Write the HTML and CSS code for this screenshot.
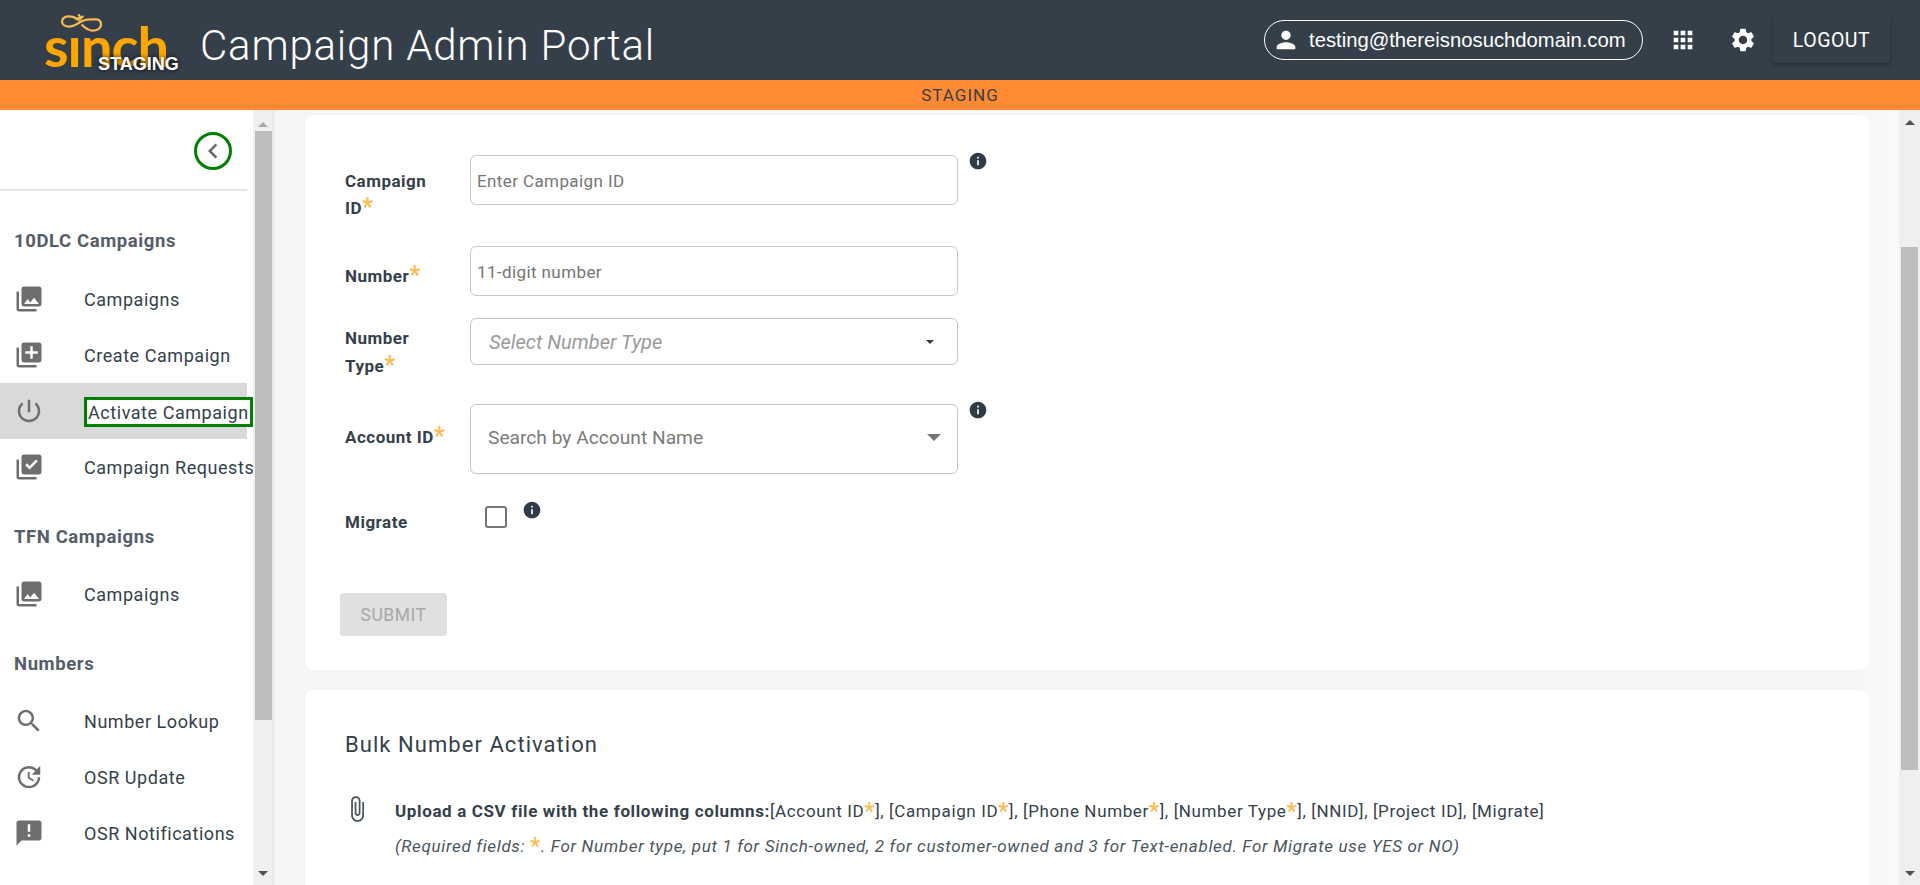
FILE: index.html
```html
<!DOCTYPE html>
<html lang="en">
<head>
<meta charset="utf-8">
<title>Campaign Admin Portal</title>
<link rel="stylesheet" href="styles.css">
</head>
<body>
<svg class="defs" width="0" height="0" aria-hidden="true">
  <symbol id="i-photo" viewBox="0 0 24 24"><path d="M22 16V4c0-1.1-.9-2-2-2H8c-1.1 0-2 .9-2 2v12c0 1.1.9 2 2 2h12c1.1 0 2-.9 2-2zm-11-4l2.03 2.71L16 11l4 5H8l3-4zM2 6v14c0 1.1.9 2 2 2h14v-2H4V6H2z"/></symbol>
  <symbol id="i-add" viewBox="0 0 24 24"><path d="M4 6H2v14c0 1.1.9 2 2 2h14v-2H4V6zm16-4H8c-1.1 0-2 .9-2 2v12c0 1.1.9 2 2 2h12c1.1 0 2-.9 2-2V4c0-1.1-.9-2-2-2zm-1 9h-4v4h-2v-4H9V9h4V5h2v4h4v2z"/></symbol>
  <symbol id="i-power" viewBox="0 0 24 24"><path d="M13 3h-2v10h2V3zm4.83 2.17l-1.42 1.42C17.99 7.86 19 9.81 19 12c0 3.87-3.13 7-7 7s-7-3.13-7-7c0-2.19 1.01-4.14 2.58-5.42L6.17 5.17C4.23 6.82 3 9.26 3 12c0 4.97 4.03 9 9 9s9-4.03 9-9c0-2.74-1.23-5.18-3.17-6.83z"/></symbol>
  <symbol id="i-check" viewBox="0 0 24 24"><path d="M20 2H8c-1.1 0-2 .9-2 2v12c0 1.1.9 2 2 2h12c1.1 0 2-.9 2-2V4c0-1.1-.9-2-2-2zm-7.53 12L9 10.5l1.4-1.41 2.07 2.08L17.6 6 19 7.41 12.47 14zM4 6H2v14c0 1.1.9 2 2 2h14v-2H4V6z"/></symbol>
  <symbol id="i-search" viewBox="0 0 24 24"><path d="M15.5 14h-.79l-.28-.27C15.41 12.59 16 11.11 16 9.5 16 5.91 13.09 3 9.5 3S3 5.91 3 9.5 5.91 16 9.5 16c1.61 0 3.09-.59 4.23-1.57l.27.28v.79l5 4.99L20.49 19l-4.99-5zm-6 0C7.01 14 5 11.99 5 9.5S7.01 5 9.5 5 14 7.01 14 9.5 11.99 14 9.5 14z"/></symbol>
  <symbol id="i-update" viewBox="0 0 24 24"><path d="M21 10.12h-6.78l2.74-2.82c-2.73-2.7-7.15-2.8-9.88-.1-2.73 2.71-2.73 7.08 0 9.79s7.15 2.71 9.88 0C18.32 15.65 19 14.08 19 12.1h2c0 1.98-.88 4.55-2.64 6.29-3.51 3.48-9.21 3.48-12.72 0-3.5-3.47-3.53-9.11-.02-12.58s9.14-3.47 12.65 0L21 3v7.12zM12.5 8v4.25l3.5 2.08-.72 1.21L11 13V8h1.5z"/></symbol>
  <symbol id="i-notify" viewBox="0 0 24 24"><path d="M20 2H4c-1.1 0-1.99.9-1.99 2L2 22l4-4h14c1.1 0 2-.9 2-2V4c0-1.1-.9-2-2-2zm-7 9h-2V5h2v6zm0 4h-2v-2h2v2z"/></symbol>
  <symbol id="i-info" viewBox="0 0 24 24"><path d="M12 2C6.48 2 2 6.48 2 12s4.48 10 10 10 10-4.48 10-10S17.52 2 12 2zm1 15h-2v-6h2v6zm0-8h-2V7h2v2z"/></symbol>
</svg>

<header class="topbar">
  <div class="logo">
    <svg class="logo-knot" viewBox="0 0 40 20"><path d="M19 8C15 4 11 3 7 3 3 3 1 6 1 8c0 3 3 5 7 5 5 0 9-4 14-6 4-1.500 8-1 12-1 3 0 5 2 5 5 0 4-4 6-8 6-5 0-8-3-11-6M17 1l3 5M14 6l8-3"/></svg>
    <span class="logo-word">sınch</span>
    <span class="logo-tag">STAGING</span>
  </div>
  <h1 class="app-title">Campaign Admin Portal</h1>
  <div class="top-actions">
    <div class="user-pill">
      <svg class="pill-icon" viewBox="0 0 24 24"><path d="M12 12c2.21 0 4-1.79 4-4s-1.79-4-4-4-4 1.79-4 4 1.79 4 4 4zm0 2c-2.67 0-8 1.34-8 4v2h16v-2c0-2.66-5.33-4-8-4z"/></svg>
      <span>testing@thereisnosuchdomain.com</span>
    </div>
    <svg class="top-icon grid-icon" viewBox="0 0 24 24"><path d="M4 8h4V4H4v4zm6 12h4v-4h-4v4zm-6 0h4v-4H4v4zm0-6h4v-4H4v4zm6 0h4v-4h-4v4zm6-10v4h4V4h-4zm-6 4h4V4h-4v4zm6 6h4v-4h-4v4zm0 6h4v-4h-4v4z"/></svg>
    <svg class="top-icon gear-icon" viewBox="0 0 24 24"><path d="M19.14 12.94c.04-.3.06-.61.06-.94 0-.32-.02-.64-.07-.94l2.03-1.58c.18-.14.23-.41.12-.61l-1.92-3.32c-.12-.22-.37-.29-.59-.22l-2.39.96c-.5-.38-1.03-.7-1.62-.94l-.36-2.54c-.04-.24-.24-.41-.48-.41h-3.84c-.24 0-.43.17-.47.41l-.36 2.54c-.59.24-1.13.57-1.62.94l-2.39-.96c-.22-.08-.47 0-.59.22L2.74 8.87c-.12.21-.08.47.12.61l2.03 1.58c-.05.3-.09.63-.09.94s.02.64.07.94l-2.03 1.58c-.18.14-.23.41-.12.61l1.92 3.32c.12.22.37.29.59.22l2.39-.96c.5.38 1.03.7 1.62.94l.36 2.54c.05.24.24.41.48.41h3.84c.24 0 .44-.17.47-.41l.36-2.54c.59-.24 1.13-.56 1.62-.94l2.39.96c.22.08.47 0 .59-.22l1.92-3.32c.12-.22.07-.47-.12-.61l-2.01-1.58zM12 15.6c-1.98 0-3.6-1.62-3.6-3.6s1.62-3.6 3.6-3.6 3.6 1.62 3.6 3.6-1.62 3.6-3.6 3.6z"/></svg>
    <button class="logout">LOGOUT</button>
  </div>
</header>
<div class="env-banner">STAGING</div>

<div class="layout">
  <aside class="sidebar">
    <nav class="side-content">
      <div class="collapse-row">
        <span class="collapse-btn"><svg viewBox="0 0 24 24"><path d="M15.41 7.41L14 6l-6 6 6 6 1.41-1.41L10.83 12z"/></svg></span>
      </div>
      <h2 class="side-title first">10DLC Campaigns</h2>
      <a class="side-item"><svg class="side-icon"><use href="#i-photo"/></svg><span>Campaigns</span></a>
      <a class="side-item"><svg class="side-icon"><use href="#i-add"/></svg><span>Create Campaign</span></a>
      <a class="side-item active"><svg class="side-icon"><use href="#i-power"/></svg><span class="focus-label">Activate Campaign</span></a>
      <a class="side-item"><svg class="side-icon"><use href="#i-check"/></svg><span>Campaign Requests</span></a>
      <h2 class="side-title">TFN Campaigns</h2>
      <a class="side-item"><svg class="side-icon"><use href="#i-photo"/></svg><span>Campaigns</span></a>
      <h2 class="side-title">Numbers</h2>
      <a class="side-item"><svg class="side-icon"><use href="#i-search"/></svg><span>Number Lookup</span></a>
      <a class="side-item"><svg class="side-icon"><use href="#i-update"/></svg><span>OSR Update</span></a>
      <a class="side-item"><svg class="side-icon"><use href="#i-notify"/></svg><span>OSR Notifications</span></a>
    </nav>
    <div class="scrollbar side-scroll">
      <span class="arrow up"></span>
      <span class="thumb"></span>
      <span class="arrow down"></span>
    </div>
  </aside>

  <main class="main">
    <div class="main-content">
      <section class="card form-card">
        <div class="field f-campaign">
          <label class="field-label">Campaign ID<em>*</em></label>
          <input class="text-input" placeholder="Enter Campaign ID">
          <svg class="info"><use href="#i-info"/></svg>
        </div>
        <div class="field f-number">
          <label class="field-label">Number<em>*</em></label>
          <input class="text-input" placeholder="11-digit number">
        </div>
        <div class="field f-type">
          <label class="field-label">Number Type<em>*</em></label>
          <div class="select select-type"><span>Select Number Type</span><i class="caret small"></i></div>
        </div>
        <div class="field f-account">
          <label class="field-label">Account ID<em>*</em></label>
          <div class="select select-account"><span>Search by Account Name</span><i class="caret"></i></div>
          <svg class="info"><use href="#i-info"/></svg>
        </div>
        <div class="field f-migrate">
          <label class="field-label">Migrate</label>
          <span class="checkbox"></span>
          <svg class="info"><use href="#i-info"/></svg>
        </div>
        <button class="submit" disabled>SUBMIT</button>
      </section>

      <section class="card bulk-card">
        <h3 class="bulk-title">Bulk Number Activation</h3>
        <div class="bulk-row">
          <svg class="clip" viewBox="0 0 24 24"><path d="M16.5 6v11.5c0 2.21-1.79 4-4 4s-4-1.79-4-4V5c0-1.38 1.12-2.5 2.5-2.5s2.5 1.12 2.5 2.5v10.5c0 .55-.45 1-1 1s-1-.45-1-1V6H10v9.5c0 1.38 1.12 2.5 2.5 2.5s2.5-1.12 2.5-2.5V5c0-2.21-1.79-4-4-4S7 2.79 7 5v12.5c0 3.04 2.46 5.5 5.5 5.5s5.5-2.46 5.5-5.5V6h-1.5z"/></svg>
          <div class="bulk-text">
            <p class="bulk-line"><strong>Upload a CSV file with the following columns:</strong>[Account ID<em>*</em>], [Campaign ID<em>*</em>], [Phone Number<em>*</em>], [Number Type<em>*</em>], [NNID], [Project ID], [Migrate]</p>
            <p class="bulk-note">(Required fields: <em>*</em>. For Number type, put 1 for Sinch-owned, 2 for customer-owned and 3 for Text-enabled. For Migrate use YES or NO)</p>
          </div>
        </div>
      </section>
    </div>
    <div class="scrollbar main-scroll">
      <span class="arrow up"></span>
      <span class="thumb"></span>
      <span class="arrow down"></span>
    </div>
  </main>
</div>
</body>
</html>
```
FILE: styles.css
```css
* { box-sizing: border-box; }
html, body { margin: 0; height: 885px; overflow: hidden; }
body { font-family: Roboto, "Liberation Sans", sans-serif; color: #343f4a; background: #fff; }
.defs { position: absolute; }

.topbar { height: 80px; background: #343f4a; color: #fff; display: flex; align-items: center; padding-left: 44px; }
.logo { position: relative; width: 156px; height: 80px; flex: none; }
.logo-knot { position: absolute; left: 17px; top: 13px; width: 41px; height: 21px; fill: none; stroke: #f5b955; stroke-width: 2.2; }
.logo-word { position: absolute; left: 0; top: 13px; font: 700 56px/66px Lato, sans-serif; color: #ffa600; letter-spacing: -1px; }
.logo-tag { position: absolute; left: 54px; top: 54px; font: 700 18px/20px "Liberation Sans", sans-serif; color: #fff; text-shadow: 0 0 4px #000; }
.app-title { margin: 0; padding-top: 12px; font-size: 42px; font-weight: 300; letter-spacing: .8px; line-height: 68px; }
.top-actions { margin-left: auto; display: flex; align-items: center; padding-right: 30px; }
.user-pill { width: 379px; height: 40px; border: 1px solid #fff; border-radius: 20px; display: flex; align-items: center; gap: 9px; padding-left: 7px; font: 20.25px "Liberation Sans", sans-serif; }
.pill-icon { width: 28px; height: 28px; fill: #fff; }
.top-icon { width: 28px; height: 28px; fill: #fff; flex: none; }
.grid-icon { margin-left: 26px; }
.gear-icon { margin-left: 32px; }
.logout { margin-left: 16px; width: 117px; height: 46px; border: 0; border-radius: 4px; background: #343f4a; color: #fff; font: 400 19.5px Roboto, sans-serif; letter-spacing: .5px; box-shadow: 0 2px 4px rgba(0,0,0,.3); }

.env-banner { height: 30px; background: #ff8a33; text-align: center; font-size: 17px; line-height: 31px; letter-spacing: 1px; }

.layout { display: flex; height: 775px; }
.sidebar { width: 274px; flex: none; display: flex; background: #fff; overflow: hidden; }
.side-content { width: 253px; flex: none; overflow: hidden; }
.collapse-row { height: 81px; width: 247px; border-bottom: 2px solid #e4e4e4; display: flex; justify-content: flex-end; padding: 22px 15px 0 0; }
.collapse-btn { width: 38px; height: 38px; border: 3px solid #008000; border-radius: 50%; display: flex; align-items: center; justify-content: center; }
.collapse-btn svg { width: 30px; height: 30px; fill: #666; flex: none; }
.side-title { margin: 27px 0 16px 14px; padding-top: 1px; height: 28px; font-size: 18.5px; line-height: 28px; font-weight: 700; letter-spacing: .6px; color: #555d69; }
.side-title.first { margin-top: 36px; padding-top: 0; }
.side-item { display: flex; align-items: center; gap: 40px; height: 56px; width: 247px; padding-left: 14px; font-size: 18px; color: #343f4a; white-space: nowrap; letter-spacing: .55px; }
.side-item.active { background: #d9d9d9; }
.side-icon { width: 30px; height: 30px; fill: #6e6e6e; flex: none; }
.side-item .focus-label { background: #fff; outline: 3px solid #008000; outline-offset: -3px; height: 30px; line-height: 30px; padding: 1px 0 0 4px; width: 169px; flex: none; margin-top: 2px; }

.scrollbar { width: 21px; flex: none; background: #efefef; display: flex; flex-direction: column; align-items: center; position: relative; }
.side-scroll { border-right: 1px solid #e4e4e4; width: 21px; }
.thumb { width: 17px; background: #bdbdbd; display: block; }
.side-scroll .thumb { height: 589px; margin-top: 4px; }
.main-scroll .thumb { height: 523px; margin-top: 122px; }
.arrow { width: 0; height: 0; border-left: 5px solid transparent; border-right: 5px solid transparent; }
.arrow.up { border-bottom: 5px solid #a8a8a8; margin-top: 10px; }
.arrow.down { border-top: 5px solid #505050; margin-top: auto; margin-bottom: 9px; }
.main-scroll .arrow.up { border-bottom-color: #505050; }
.side-scroll .arrow.up { margin-top: 12px; }

.main { flex: 1; display: flex; height: 775px; overflow: hidden; background: linear-gradient(90deg, #f5f5f5 0, #f5f5f5 1560px, #fbfbfb 100%); }
.main-content { flex: 1; min-width: 0; padding: 5px 30px 0 31px; }
.card { background: #fff; border-radius: 8px; box-shadow: 0 0 2px rgba(0,0,0,.03); }
.form-card { height: 555px; padding: 40px 0 0 35px; }
.bulk-card { height: 300px; margin-top: 20px; padding: 40px 0 0 40px; }

.field { display: flex; align-items: flex-start; position: relative; padding-left: 5px; }
.field-label { width: 125px; flex: none; font-size: 17px; font-weight: 700; line-height: 27px; letter-spacing: .5px; }
.field-label em { font-style: normal; color: #fdbb4f; font-size: 25px; font-weight: 500; line-height: 20px; vertical-align: -2px; }
.f-campaign { height: 91px; }
.f-campaign .field-label { margin-top: 13px; width: 105px; margin-right: 20px; }
.f-number { height: 72px; }
.f-number .field-label { margin-top: 17px; }
.f-type { height: 86px; }
.f-type .field-label { width: 105px; margin-right: 20px; margin-top: 6px; line-height: 28px; }
.f-account { height: 102px; }
.f-account .field-label { margin-top: 20px; white-space: nowrap; }
.f-migrate { height: 87px; }
.f-migrate .field-label { margin-top: 3px; }

.text-input { width: 488px; height: 50px; border: 1px solid #c8c8c8; border-radius: 6px; padding: 2px 6px 0; font: 17px Roboto, sans-serif; letter-spacing: .4px; outline: 0; }
.text-input::placeholder { color: #757575; opacity: 1; }
.select { width: 488px; border: 1px solid #c4c4c4; border-radius: 6px; display: flex; align-items: center; justify-content: space-between; }
.select-type { height: 47px; padding: 0 23px 0 18px; font-size: 20px; font-style: italic; color: #9a9a9a; }
.select-account { height: 70px; padding: 0 16px 4px 17px; font-size: 19.2px; color: #7a7a7a; }
.caret { width: 0; height: 0; border-left: 7px solid transparent; border-right: 7px solid transparent; border-top: 7px solid #757575; }
.caret.small { border-left-width: 4px; border-right-width: 4px; border-top: 4px solid #343f4a; }
.info { width: 20px; height: 20px; fill: #2f3b47; flex: none; margin: -4px 0 0 10px; }
.checkbox { width: 22px; height: 22px; border: 2px solid #757575; border-radius: 3px; margin: 0 0 0 15px; flex: none; }
.f-migrate .info { margin: -6px 0 0 15px; }
.submit { width: 107px; height: 43px; border: 0; border-radius: 4px; background: #e0e0e0; color: #a8a8a8; font: 17.5px Roboto, sans-serif; letter-spacing: .5px; padding: 0; }

.bulk-title { margin: 0; font-size: 22px; font-weight: 400; line-height: 30px; letter-spacing: 1.05px; color: #343f4a; }
.bulk-row { display: flex; align-items: flex-start; margin-top: 35px; }
.clip { width: 28px; height: 28px; fill: #4a5560; flex: none; margin: 0 0 0 -2px; }
.bulk-text { margin-left: 24px; font-size: 17px; padding-top: 2px; }
.bulk-line { margin: 0; line-height: 28px; letter-spacing: .63px; white-space: nowrap; }
.bulk-line em, .bulk-note em { font-style: normal; color: #fdbb4f; font-size: 23px; font-weight: 500; line-height: 20px; vertical-align: -2px; }
.bulk-note { margin: 7px 0 0; line-height: 28px; font-style: italic; letter-spacing: .66px; white-space: nowrap; color: #4a5560; }
```
